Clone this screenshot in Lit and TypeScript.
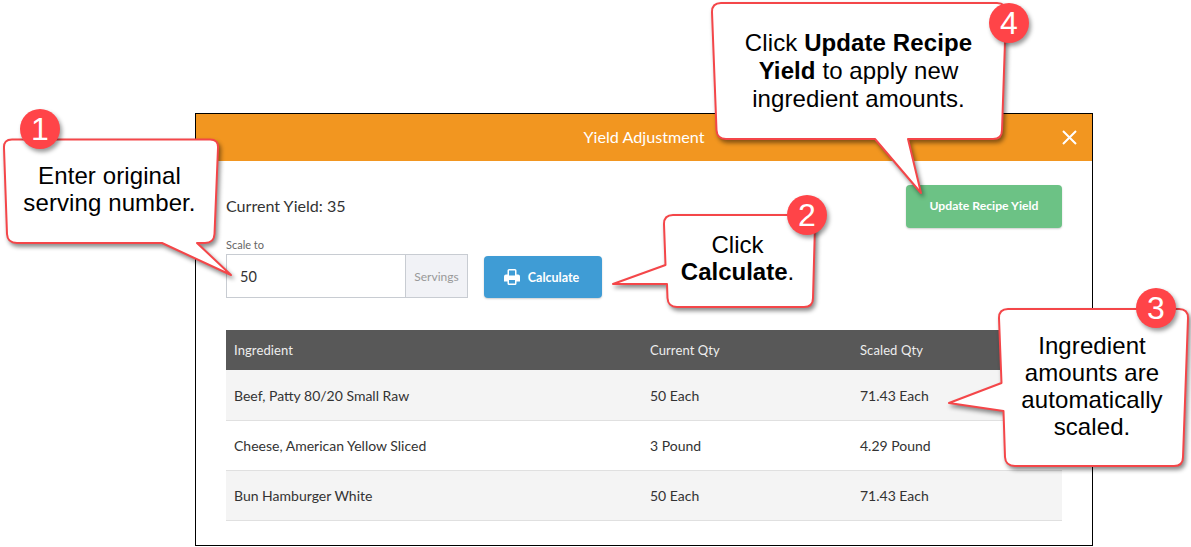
import { LitElement, html, css, svg } from "lit";
import { customElement } from "lit/decorators.js";

const rows = [
  ["Beef, Patty 80/20 Small Raw", "50 Each", "71.43 Each"],
  ["Cheese, American Yellow Sliced", "3 Pound", "4.29 Pound"],
  ["Bun Hamburger White", "50 Each", "71.43 Each"],
];

const shapes = [
  "M12 139.5H210Q218.5 139.500 218 148L214.500 234Q214 243 205 243H197L231 275L162 243H17Q7.500 243 7 234L4 148Q3.500 139.500 12 139.500Z",
  "M673 215H806Q815 215 815 224L813 298Q813 307 804 307H677Q668 307 667.500 298L667 284L613 284L665.500 265L664 224Q664 215 673 215Z",
  "M1008 309H1179Q1188 309 1188 318L1183 457Q1183 466 1174 466H1015Q1005.500 466 1005 457L1003.500 411L949 403L1001.500 383L999 318Q999 309 1008 309Z",
  "M721 3H997Q1006 3 1006 12L1002 130Q1002 139 993 139H908L921 193L875 139H726Q717 139 716.500 130L712 12Q712 3 721 3Z",
];

const badges = [
  { cx: 40, cy: 129, n: "1" },
  { cx: 807, cy: 215, n: "2" },
  { cx: 1156, cy: 308, n: "3" },
  { cx: 1009, cy: 23, n: "4" },
];

@customElement("app-root")
export class AppRoot extends LitElement {
  static styles = css`
    :host {
      display: block;
      position: relative;
      width: 1191px;
      height: 547px;
      overflow: hidden;
      background: #fff;
      font-family: "Lato", "Liberation Sans", sans-serif;
      color: #333;
    }
    .stage { padding: 113px 98px 0 195px; }
    .modal { border: 1px solid #000; height: 433px; box-sizing: border-box; background: #fff; }
    .head {
      height: 47px;
      background: #f29620;
      color: #fff;
      display: flex;
      align-items: center;
      justify-content: center;
      font-size: 16.2px;
      padding-bottom: 2px;
      box-sizing: border-box;
      position: relative;
    }
    .close { position: absolute; right: 15px; top: 16px; width: 15px; height: 15px; display: block; }
    .body { padding: 24px 30px 0; }
    .top { display: flex; justify-content: space-between; align-items: flex-start; height: 145px; }
    .yield { font-size: 16.1px; line-height: 20px; margin-top: 11px; }
    .label { font-size: 11px; color: #666; line-height: 14px; margin-top: 22px; }
    .controls { display: flex; align-items: flex-start; gap: 16px; margin-top: 2px; }
    .group { display: flex; width: 242px; height: 44px; border: 1px solid #c8ccd2; box-sizing: border-box; }
    .value { flex: 1; font-size: 14.5px; padding: 0 13px; display: flex; align-items: center; box-sizing: border-box; }
    .addon {
      width: 62px;
      box-sizing: border-box;
      background: #f1f2f6;
      border-left: 1px solid #c8ccd2;
      color: #999;
      font-size: 12px;
      display: flex;
      align-items: center;
      justify-content: center;
    }
    .btn {
      border: 0;
      padding: 0;
      border-radius: 4px;
      color: #fff;
      font-family: inherit;
      font-weight: 700;
      display: flex;
      align-items: center;
      justify-content: center;
      box-shadow: 0 1px 2px rgba(0, 0, 0, .2);
    }
    .calc { width: 118px; height: 42px; margin-top: 2px; background: #3f9cd5; font-size: 12.5px; gap: 8px; padding-right: 3px; box-sizing: border-box; }
    .calc svg { width: 16px; height: 16px; margin-bottom: 1px; }
    .update { width: 156px; height: 43px; background: #6cc285; font-size: 12.2px; padding-bottom: 2px; box-sizing: border-box; }
    table { width: 836px; border-collapse: separate; border-spacing: 0; table-layout: fixed; font-size: 14px; }
    th {
      background: #585858;
      color: #eee;
      text-align: left;
      font-weight: 400;
      font-size: 13px;
      letter-spacing: .1px;
      height: 40px;
      padding: 0 8px;
      box-sizing: border-box;
    }
    td { height: 50px; padding: 0 8px 1px; border-bottom: 1px solid #e0e0e0; box-sizing: border-box; }
    tbody tr:first-child td { height: 51px; padding-bottom: 0; }
    tbody tr:nth-child(odd) { background: #f4f4f4; }
    .c1 { width: 416px; }
    .c2, .c3 { width: 210px; }
    .overlay { position: absolute; inset: 0; width: 1191px; height: 547px; }
    .shape { fill: #fff; stroke: #f44649; stroke-width: 2; stroke-linejoin: round; filter: drop-shadow(2px 3px 2px rgba(0, 0, 0, .45)); }
    .dot { fill: #ff4448; filter: drop-shadow(2px 3px 2px rgba(0, 0, 0, .4)); }
    .num { fill: #fff; font-family: "Liberation Sans", sans-serif; font-size: 32px; text-anchor: middle; }
    .note {
      position: absolute;
      font-family: "Liberation Sans", Arial, sans-serif;
      font-size: 24px;
      letter-spacing: .1px;
      line-height: 27px;
      color: #000;
      text-align: center;
      white-space: nowrap;
      transform: translateX(-50%);
    }
    .n1 { left: 109.5px; top: 162px; }
    .n2 { left: 737.5px; top: 231px; letter-spacing: 0; }
    .n3 { left: 1092px; top: 332px; }
    .n4 { left: 858.5px; top: 29px; line-height: 28px; }
  `;

  render() {
    return html`
      <div class="stage">
        <div class="modal">
          <div class="head">
            Yield Adjustment
            <svg class="close" viewBox="0 0 15 15"><path d="M1 1L14 14M14 1L1 14" stroke="#fff" stroke-width="2" fill="none"/></svg>
          </div>
          <div class="body">
            <div class="top">
              <div>
                <div class="yield">Current Yield: 35</div>
                <div class="label">Scale to</div>
                <div class="controls">
                  <div class="group"><div class="value">50</div><div class="addon">Servings</div></div>
                  <button class="btn calc">
                    <svg viewBox="0 0 16 16"><path fill="#fff" d="M3.500 1.500Q3.500 0 5 0H11Q12.500 0 12.500 1.500V5.500H14Q16 5.500 16 7.500V12.500H12.500V14.500Q12.500 16 11 16H5Q3.500 16 3.500 14.500V12.500H0V7.500Q0 5.500 2 5.500H3.500ZM5 1.500V6.500H11V1.500ZM5 11V14.500H11V11Z"/></svg>
                    Calculate
                  </button>
                </div>
              </div>
              <button class="btn update">Update Recipe Yield</button>
            </div>
            <table>
              <thead><tr><th class="c1">Ingredient</th><th class="c2">Current Qty</th><th class="c3">Scaled Qty</th></tr></thead>
              <tbody>
                ${rows.map((r) => html`<tr>${r.map((c) => html`<td>${c}</td>`)}</tr>`)}
              </tbody>
            </table>
          </div>
        </div>
      </div>
      <svg class="overlay" viewBox="0 0 1191 547">
        ${shapes.map((d) => svg`<path class="shape" d=${d}></path>`)}
        ${badges.map((b) => svg`<circle class="dot" cx=${b.cx} cy=${b.cy} r="20"></circle><text class="num" x=${b.cx} y=${b.cy + 11}>${b.n}</text>`)}
      </svg>
      <div class="note n1">Enter original<br />serving number.</div>
      <div class="note n2">Click<br /><b>Calculate</b>.</div>
      <div class="note n3">Ingredient<br />amounts are<br />automatically<br />scaled.</div>
      <div class="note n4">Click <b>Update Recipe</b><br /><b>Yield</b> to apply new<br />ingredient amounts.</div>
    `;
  }
}
